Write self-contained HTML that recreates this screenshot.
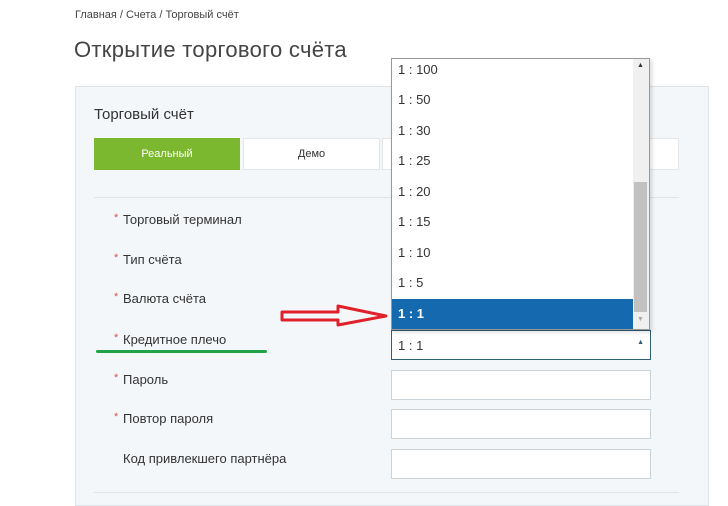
<!DOCTYPE html>
<html><head><meta charset="utf-8"><style>
*{margin:0;padding:0;box-sizing:border-box}
body{width:728px;height:502px;overflow:hidden;background:#fff;font-family:"Liberation Sans",sans-serif;color:#333;position:relative}
.a{position:absolute}
.lbl{position:absolute;left:123px;font-size:13px;color:#333}
.st{position:absolute;left:114px;font-size:11px;color:#d9534f}
.inp{position:absolute;left:391px;width:260px;height:30px;background:#fff;border:1px solid #ccd3d9}
.it{position:absolute;left:398px;font-size:13px;color:#333}
</style></head><body>
<div class="a" style="left:75px;top:9px;font-size:11px;color:#444">Главная / Счета / Торговый счёт</div>
<div class="a" style="left:74px;top:37px;font-size:22px;color:#444;letter-spacing:0.3px">Открытие торгового счёта</div>
<div class="a" style="left:75px;top:86px;width:634px;height:420px;background:#f4f7fa;border:1px solid #dfe4e8"></div>
<div class="a" style="left:94px;top:106px;font-size:15px;color:#333">Торговый счёт</div>
<div class="a" style="left:94px;top:138px;width:146px;height:32px;background:#7cb82f;color:#fff;font-size:11px;text-align:center;line-height:32px">Реальный</div>
<div class="a" style="left:243px;top:138px;width:137px;height:32px;background:#fff;border:1px solid #e3e7ea;font-size:11px;text-align:center;line-height:30px">Демо</div>
<div class="a" style="left:382px;top:138px;width:297px;height:32px;background:#fff;border:1px solid #e3e7ea"></div>
<div class="a" style="left:94px;top:197px;width:585px;height:1px;background:#dfe4e8"></div>
<div class="a" style="left:94px;top:492px;width:585px;height:1px;background:#dfe4e8"></div>
<div class="st" style="top:212px">*</div><div class="lbl" style="top:212px">Торговый терминал</div>
<div class="st" style="top:252px">*</div><div class="lbl" style="top:252px">Тип счёта</div>
<div class="st" style="top:291px">*</div><div class="lbl" style="top:291px">Валюта счёта</div>
<div class="st" style="top:332px">*</div><div class="lbl" style="top:332px">Кредитное плечо</div>
<div class="st" style="top:372px">*</div><div class="lbl" style="top:372px">Пароль</div>
<div class="st" style="top:411px">*</div><div class="lbl" style="top:411px">Повтор пароля</div>
<div class="lbl" style="top:451px">Код привлекшего партнёра</div>
<div class="a" style="left:96px;top:350px;width:171px;height:3px;background:#22a347;border-radius:2px"></div>
<div class="inp" style="top:330px;border-color:#2f5f73"><span style="position:absolute;left:6px;top:7px;font-size:13px">1 : 1</span><span style="position:absolute;right:6px;top:8px;font-size:7px;color:#2f5f73">▲</span></div>
<div class="inp" style="top:370px"></div>
<div class="inp" style="top:409px"></div>
<div class="inp" style="top:449px"></div>
<div class="a" style="left:391px;top:58px;width:259px;height:272px;background:#fff;border:1px solid #999;box-shadow:2px 2px 4px rgba(0,0,0,.15)"></div>
<div class="a" style="left:633px;top:59px;width:16px;height:270px;background:#f0f0f0"></div>
<div class="a" style="left:634px;top:182px;width:13px;height:130px;background:#c1c1c1"></div>
<div class="a" style="left:637px;top:62px;font-size:7px;color:#333">▲</div>
<div class="a" style="left:637px;top:316px;font-size:7px;color:#aaa">▼</div>
<div class="a" style="left:392px;top:299px;width:241px;height:30px;background:#1569ae"></div>
<div class="it" style="top:62px">1 : 100</div>
<div class="it" style="top:92px">1 : 50</div>
<div class="it" style="top:123px">1 : 30</div>
<div class="it" style="top:153px">1 : 25</div>
<div class="it" style="top:184px">1 : 20</div>
<div class="it" style="top:214px">1 : 15</div>
<div class="it" style="top:245px">1 : 10</div>
<div class="it" style="top:275px">1 : 5</div>
<div class="it" style="top:306px;color:#fff;font-weight:bold">1 : 1</div>
<svg class="a" style="left:278px;top:302px" width="112" height="26"><path d="M4 10 L60 10 L60 4 L108 14 L60 23 L60 18 L4 18 Z" fill="none" stroke="#e0202a" stroke-width="3" stroke-linejoin="round"/></svg>
</body></html>
